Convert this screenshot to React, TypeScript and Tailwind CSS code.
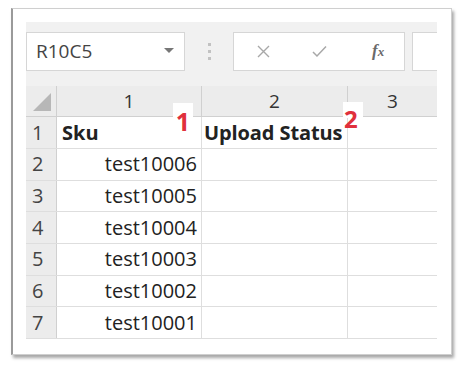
const rows = ["test10006", "test10005", "test10004", "test10003", "test10002", "test10001"];

const font = { fontFamily: '"Open Sans", "Noto Sans", sans-serif' };

const App = () => {
  return (
    <div className="w-[463px] h-[371px] bg-white pt-[8px] pl-[11px]" style={font}>
      <div className="w-[441px] h-[347px] bg-white border border-[#cfcfcf] border-l-[#9a9a9a] border-l-2 shadow-[2px_3px_3px_rgba(0,0,0,0.35)] pt-[13px] pl-[13px]">
        <div className="w-[411px] bg-[#f1f1f1]">
          {/* formula bar */}
          <div className="flex items-center h-[64px] pb-[6px]">
            <div className="w-[159px] h-[39px] bg-white border border-[#d6d6d6] flex items-center justify-between pl-[9px] pr-[10px]">
              <span className="text-[19px] text-[#444]">R10C5</span>
              <svg width="10" height="6" viewBox="0 0 10 6">
                <path d="M0 0 L10 0 L5 5 Z" fill="#777" />
              </svg>
            </div>
            <div className="w-[48px] flex flex-col items-center gap-[4px]">
              <span className="w-[3px] h-[3px] bg-[#c2c2c2]" />
              <span className="w-[3px] h-[3px] bg-[#c2c2c2]" />
              <span className="w-[3px] h-[3px] bg-[#c2c2c2]" />
            </div>
            <div className="w-[172px] h-[39px] bg-white border border-[#d6d6d6] flex items-center">
              <svg className="ml-[23px]" width="13" height="13" viewBox="0 0 13 13">
                <path d="M1 1 L12 12 M12 1 L1 12" stroke="#a8a8a8" strokeWidth="1.4" />
              </svg>
              <svg className="ml-[42px]" width="15" height="13" viewBox="0 0 15 13">
                <path d="M1 7 L5 11 L14 1.5" stroke="#a8a8a8" strokeWidth="1.5" fill="none" />
              </svg>
              <span className="ml-[45px] text-[17px] text-[#6a6a6a] italic font-bold" style={{ fontFamily: '"Liberation Serif", serif' }}>
                f<span className="text-[13px]">x</span>
              </span>
            </div>
            <div className="ml-[7px] flex-1 h-[39px] bg-white border border-[#d6d6d6] border-r-0" />
          </div>

          {/* grid */}
          <div className="relative">
            <div className="flex h-[31px] bg-[#ececec] border-b border-[#d0d0d0] text-[19px] text-[#333]">
              <div className="w-[31px] border-r border-[#d0d0d0] flex items-end justify-center pb-[5px] pl-[2px]">
                <svg width="18" height="18" viewBox="0 0 18 18">
                  <path d="M18 0 L18 18 L0 18 Z" fill="#b7b7b7" />
                </svg>
              </div>
              <div className="w-[145px] border-r border-[#d0d0d0] flex items-center justify-center">1</div>
              <div className="w-[146px] border-r border-[#d0d0d0] flex items-center justify-center">2</div>
              <div className="flex-1 flex items-center justify-center">3</div>
            </div>
            <div className="flex h-[32px] bg-white border-b border-[#dedede] text-[20px] text-[#222]">
              <div className="w-[31px] bg-[#ececec] border-r border-[#d0d0d0] flex items-center pl-[6px] text-[#444]">1</div>
              <div className="w-[145px] border-r border-[#dedede] flex items-center pl-[5px] font-bold">Sku</div>
              <div className="w-[146px] border-r border-[#dedede] flex items-center pl-[2px] font-bold tracking-[-0.1px]">Upload Status</div>
              <div className="flex-1" />
            </div>
            {rows.map((sku, i) => (
              <div key={sku} className="flex h-[31.7px] bg-white border-b border-[#dedede] text-[20px] text-[#222]">
                <div className="w-[31px] bg-[#ececec] border-r border-[#d0d0d0] flex items-center pl-[6px] text-[#444]">{i + 2}</div>
                <div className="w-[145px] border-r border-[#dedede] flex items-center justify-end pr-[4px]">{sku}</div>
                <div className="w-[146px] border-r border-[#dedede]" />
                <div className="flex-1" />
              </div>
            ))}
            <div className="absolute left-[147px] top-[17px] w-[20px] h-[30px] bg-white flex items-start justify-center text-[25px] font-bold text-[#e0303c] leading-none pt-[6px]">
              1
            </div>
            <div className="absolute left-[317px] top-[16px] w-[20px] h-[16px] bg-white" />
            <div className="absolute left-[318px] top-[21px] text-[24px] font-bold text-[#e0303c] leading-none">
              2
            </div>
          </div>
        </div>
      </div>
    </div>
  );
};

export default App;
